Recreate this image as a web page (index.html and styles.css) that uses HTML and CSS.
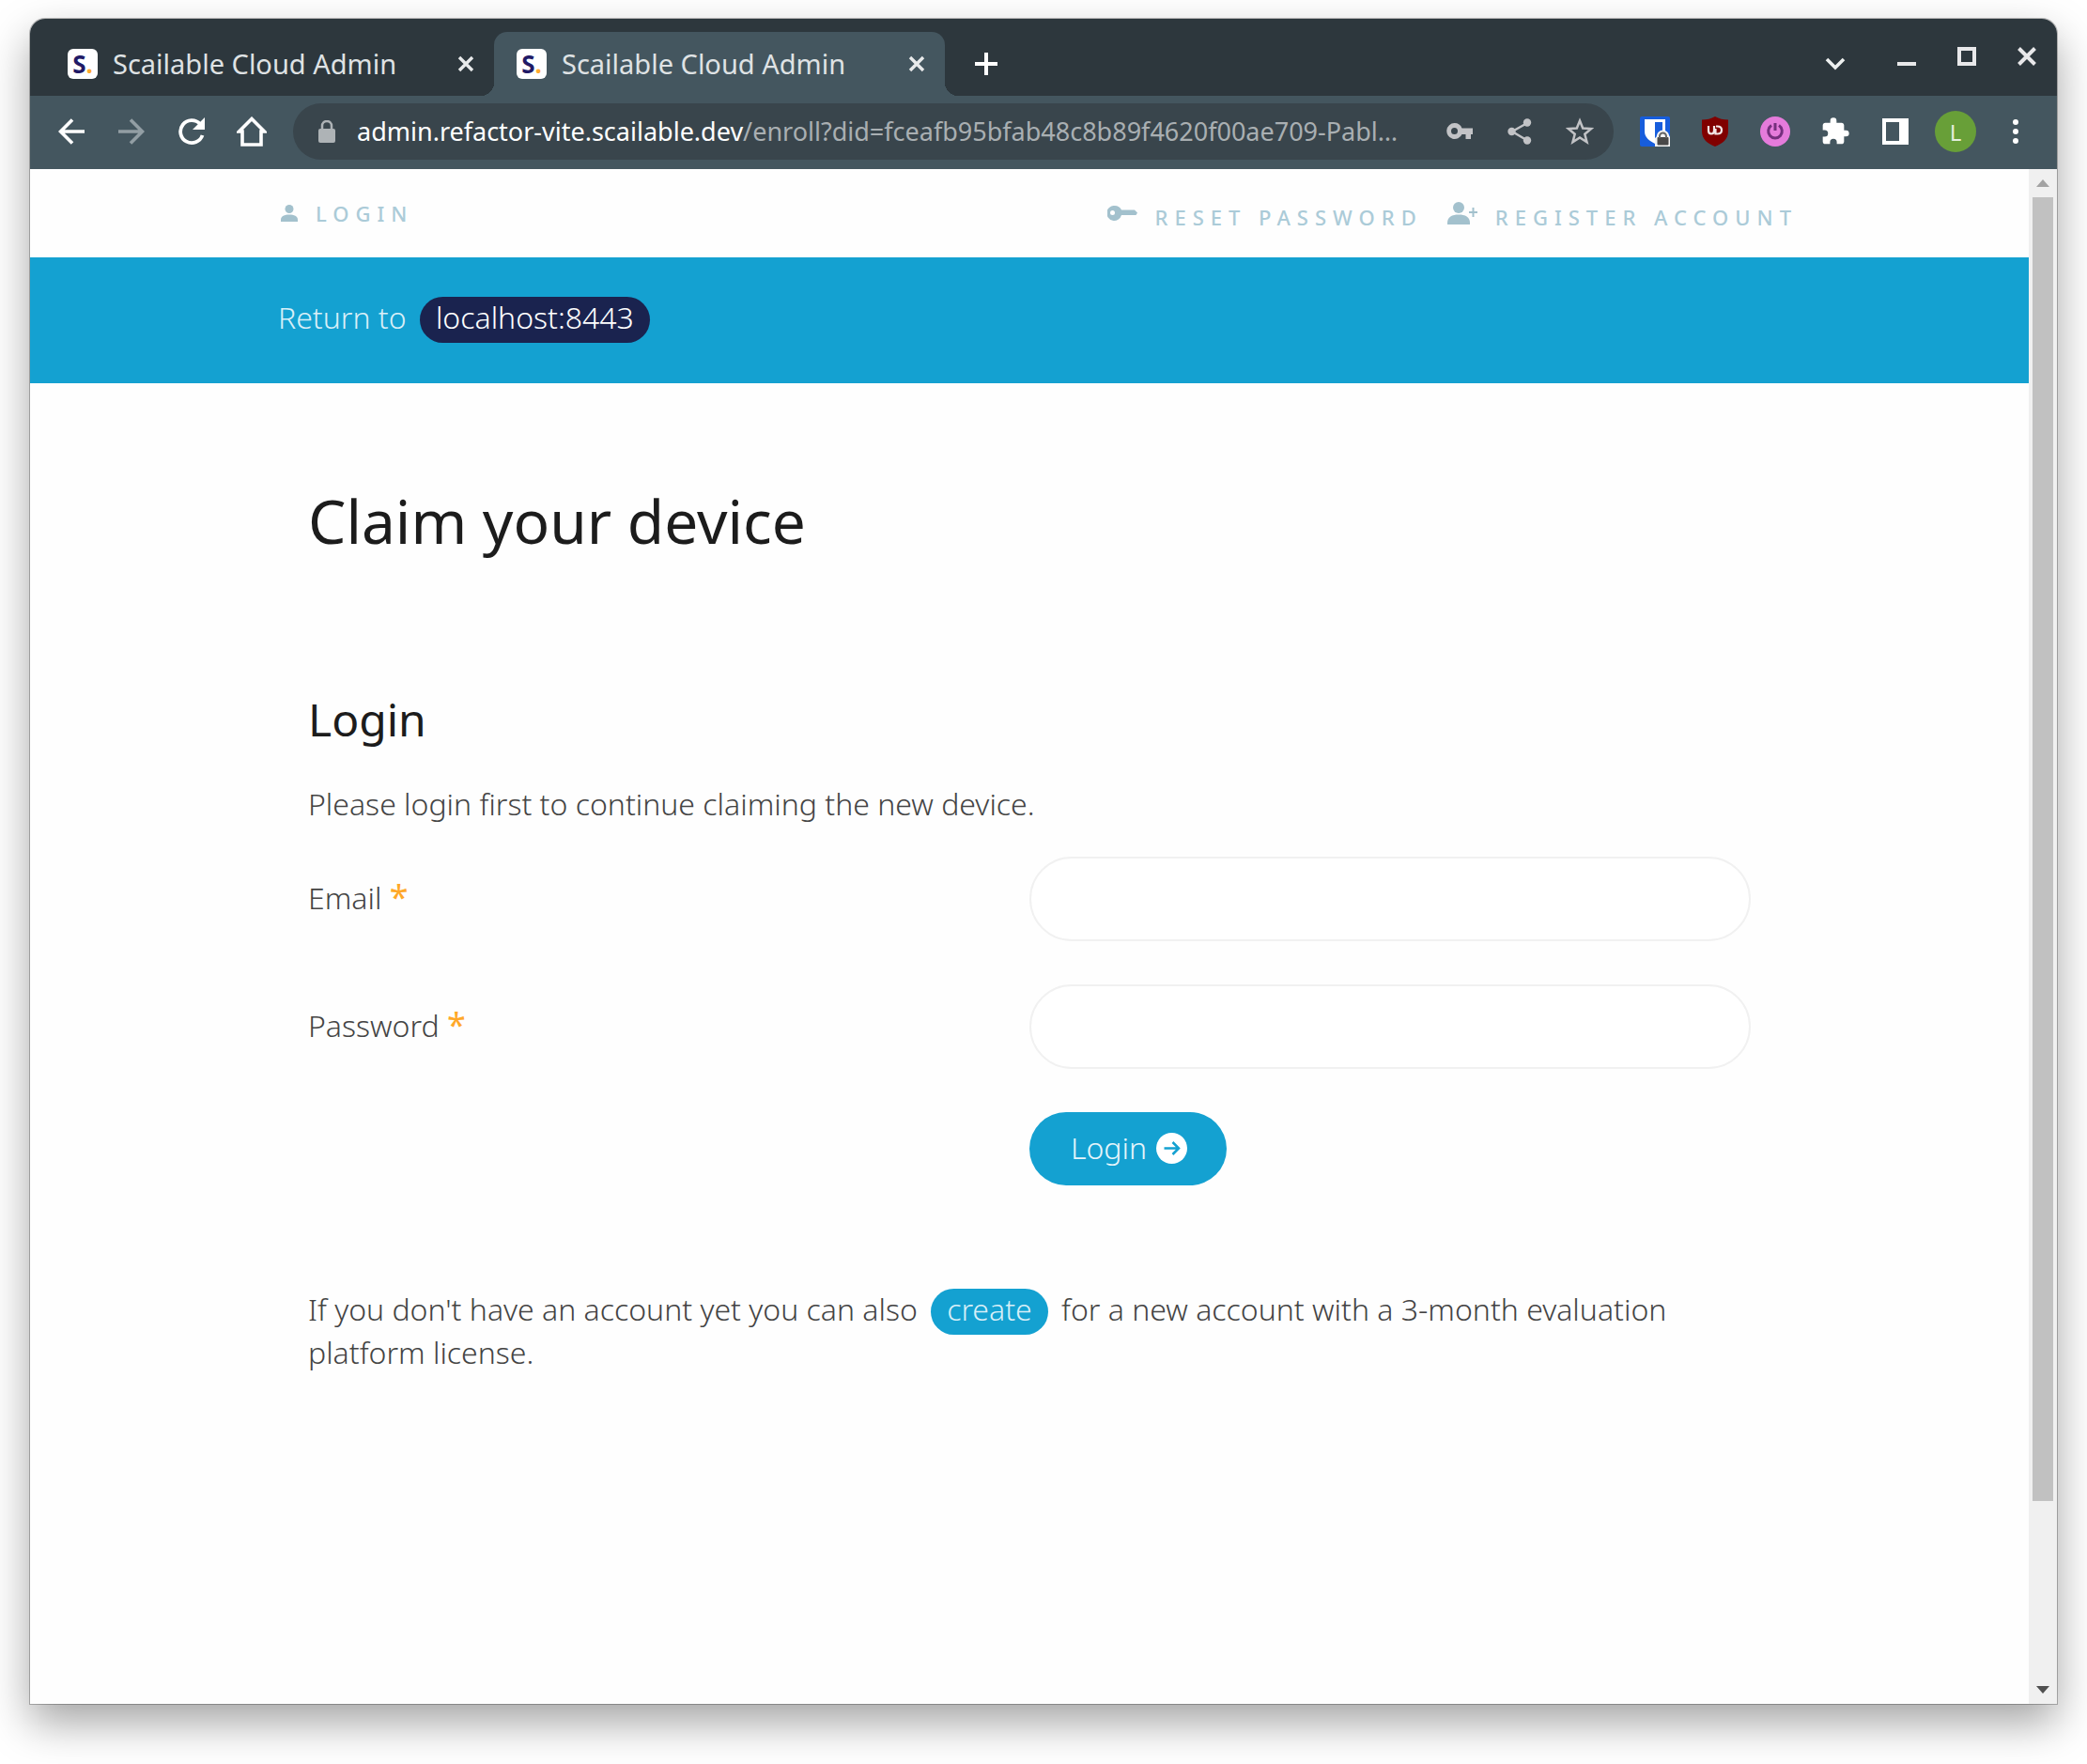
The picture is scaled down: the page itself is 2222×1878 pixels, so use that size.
FILE: index.html
```
<!DOCTYPE html>
<html lang="en">
<head>
<meta charset="utf-8">
<title>Scailable Cloud Admin</title>
<link rel="stylesheet" href="styles.css">
</head>
<body>
<div class="window">
  <div class="tabstrip">
    <div class="tab">
      <span class="favicon">S<i>.</i></span>
      <span class="tab-title">Scailable Cloud Admin</span>
      <button class="tab-close" type="button" aria-label="Close tab"><svg width="18" height="18" viewBox="0 0 18 18"><path d="M2 2l14 14M16 2L2 16" stroke="#e8eaeb" stroke-width="3.4"/></svg></button>
    </div>
    <div class="tab tab-active">
      <span class="favicon">S<i>.</i></span>
      <span class="tab-title">Scailable Cloud Admin</span>
      <button class="tab-close" type="button" aria-label="Close tab"><svg width="18" height="18" viewBox="0 0 18 18"><path d="M2 2l14 14M16 2L2 16" stroke="#e8eaeb" stroke-width="3.4"/></svg></button>
    </div>
    <button class="icon-button new-tab" type="button" aria-label="New tab"><svg width="24" height="24" viewBox="0 0 24 24"><path d="M12 0v24M0 12h24" stroke="#fff" stroke-width="4"/></svg></button>
    <button class="icon-button tab-search" type="button" aria-label="Search tabs"><svg width="22" height="14" viewBox="0 0 22 14"><path d="M2 2l9 9 9-9" fill="none" stroke="#eef0f0" stroke-width="3.6"/></svg></button>
    <div class="window-controls">
      <button class="icon-button" type="button" aria-label="Minimize"><svg width="20" height="20" viewBox="0 0 20 20"><path d="M0 18h20" stroke="#e8e8ea" stroke-width="4"/></svg></button>
      <button class="icon-button" type="button" aria-label="Maximize"><svg width="20" height="20" viewBox="0 0 20 20"><path d="M2 2h16v16H2z" fill="none" stroke="#e8e8ea" stroke-width="4"/></svg></button>
      <button class="icon-button" type="button" aria-label="Close"><svg width="20" height="20" viewBox="0 0 20 20"><path d="M1.500 1.500l17 17M18.500 1.500l-17 17" stroke="#e8e8ea" stroke-width="4"/></svg></button>
    </div>
  </div>

  <div class="toolbar">
    <button class="icon-button" type="button" aria-label="Back"><svg width="28" height="28" viewBox="0 0 28 28"><path d="M28 14H3M15 1.500L2.500 14 15 26.500" fill="none" stroke="#fff" stroke-width="3.600"/></svg></button>
    <button class="icon-button" type="button" aria-label="Forward"><svg width="28" height="28" viewBox="0 0 28 28"><path d="M0 14h25M13 1.500L25.500 14 13 26.500" fill="none" stroke="#929ea4" stroke-width="3.600"/></svg></button>
    <button class="icon-button" type="button" aria-label="Reload"><svg width="30" height="30" viewBox="0 0 30 30"><path d="M26.500 19A12 12 0 1 1 24 7" fill="none" stroke="#fff" stroke-width="3.800"/><path d="M29 0v13H16z" fill="#fff"/></svg></button>
    <button class="icon-button" type="button" aria-label="Home"><svg width="32" height="32" viewBox="0 0 32 32"><path d="M16 2.500L2.500 16H6v14h20V16h3.500z" fill="none" stroke="#fff" stroke-width="3.600"/></svg></button>
    <div class="address-bar">
      <svg width="18" height="24" viewBox="0 0 18 24"><rect y="9" width="18" height="15" rx="2" fill="#aeb3b6"/><path d="M4 10V6a5 5 0 0 1 10 0v4" fill="none" stroke="#aeb3b6" stroke-width="2.500"/></svg>
      <span class="url"><b>admin.refactor-vite.scailable.dev</b>/enroll?did=fceafb95bfab48c8b89f4620f00ae709-Pabl…</span>
      <div class="address-actions">
        <button class="icon-button" type="button" aria-label="Saved passwords"><svg width="28" height="18" viewBox="0 0 28 18"><path fill="#c2c3c6" fill-rule="evenodd" d="M8.500 0a8.500 8.500 0 0 1 8 5.500H28v6.500h-2v5h-5.500v-5h-4A8.500 8.500 0 1 1 8.500 0zm0 5a3.500 3.500 0 1 0 0 7 3.500 3.500 0 0 0 0-7z"/></svg></button>
        <button class="icon-button" type="button" aria-label="Share"><svg width="26" height="28" viewBox="0 0 26 28"><path d="M21 5L5 14l16 9.500" fill="none" stroke="#c2c3c6" stroke-width="2.500"/><g fill="#c2c3c6"><circle cx="21" cy="4.500" r="4.200"/><circle cx="4.500" cy="14" r="4.200"/><circle cx="21" cy="23.500" r="4.200"/></g></svg></button>
        <button class="icon-button" type="button" aria-label="Bookmark"><svg width="30" height="30" viewBox="0 0 30 30"><path d="M15 3.500l3.200 8 8.800.6-6.700 5.600 2.200 8.500-7.500-4.700-7.500 4.700 2.200-8.500L3 12.100l8.800-.6z" fill="none" stroke="#c2c3c6" stroke-width="2.500"/></svg></button>
      </div>
    </div>
    <button class="icon-button" type="button" aria-label="Password manager"><svg width="32" height="32" viewBox="0 0 32 32"><rect width="32" height="32" rx="2" fill="#175ddc"/><path d="M5 3h22v13c0 6-5 10-11 13C10 26 5 22 5 16z" fill="#fff"/><path d="M16 6h8v10c0 4-3 7-8 10z" fill="#175ddc"/><path d="M16 32V23q2-1 2-3 1-5 6.500-5.500Q30 15 31 20l1 2v10z" fill="#f4f4f4"/><rect x="18.500" y="22" width="12" height="8.500" rx="1" fill="#484848"/><path d="M21 23v-2a3.500 3.500 0 0 1 7 0v2" fill="none" stroke="#666" stroke-width="2"/></svg></button>
    <button class="icon-button" type="button" aria-label="Content blocker"><svg width="28" height="32" viewBox="0 0 28 32"><path d="M14 0c4 2.500 9 3.500 14 3.500V16c0 8-6 13-14 16C6 29 0 24 0 16V3.500C5 3.500 10 2.500 14 0z" fill="#800000"/><path d="M7 10v5q0 3.500 3 3.500t3-3.500v-5M14.500 13v5.500h2q4.500 0 4.500-4t-4.500-4H15" fill="none" stroke="#f3e6e6" stroke-width="2.200"/></svg></button>
    <button class="icon-button" type="button" aria-label="Power extension"><svg width="32" height="32" viewBox="0 0 32 32"><circle cx="16" cy="16" r="16" fill="#e57bdb"/><path d="M12 9.500a7.300 7.300 0 1 0 8 0M16 7v8" fill="none" stroke="#752f7d" stroke-width="3"/></svg></button>
    <button class="icon-button" type="button" aria-label="Extensions"><svg width="32" height="32" viewBox="0 0 24 24"><path fill="#fff" d="M20.500 11H19V7c0-1.100-.9-2-2-2h-4V3.500a2.500 2.500 0 0 0-5 0V5H4c-1.100 0-1.990.9-1.990 2v3.800H3.500a2.700 2.700 0 0 1 0 5.400H2V20c0 1.100.9 2 2 2h3.800v-1.500a2.700 2.700 0 0 1 5.400 0V22H17c1.100 0 2-.9 2-2v-4h1.500a2.500 2.500 0 0 0 0-5z"/></svg></button>
    <button class="icon-button" type="button" aria-label="Side panel"><svg width="28" height="28" viewBox="0 0 28 28"><path fill="#fff" fill-rule="evenodd" d="M0 0h28v28H0zM4 4v20h14V4z"/></svg></button>
    <button class="icon-button avatar" type="button" aria-label="Profile">L</button>
    <button class="icon-button" type="button" aria-label="Menu"><svg width="6" height="26" viewBox="0 0 6 26"><g fill="#fff"><circle cx="3" cy="3" r="3"/><circle cx="3" cy="13" r="3"/><circle cx="3" cy="23" r="3"/></g></svg></button>
  </div>

  <div class="viewport">
    <div class="page">
      <header class="container topnav">
        <a class="nav-link" href="#login"><svg width="18" height="18" viewBox="0 0 18 18"><g fill="#a3c1cd"><circle cx="9" cy="4.500" r="4.500"/><path d="M0 18v-2c0-4 4-5.500 9-5.500s9 1.500 9 5.500v2z"/></g></svg>Login</a>
        <nav class="nav-group">
          <a class="nav-link" href="#reset"><svg class="raised" width="32" height="16" viewBox="0 0 32 16"><path fill="#a3c1cd" fill-rule="evenodd" d="M8 0a8 8 0 0 1 7 4.500h14l3 3-1.500 2.500H15A8 8 0 1 1 8 0zM5.500 5a2.500 2.500 0 1 0 0 5 2.500 2.500 0 0 0 0-5z"/></svg>Reset password</a>
          <a class="nav-link" href="#register"><svg class="raised" width="32" height="24" viewBox="0 0 32 24"><g fill="#a3c1cd"><circle cx="12" cy="6" r="6"/><path d="M0 24v-2c0-6 5-8.500 12-8.500S24 16 24 22v2z"/></g><path d="M27.500 6v10M23 11h9" stroke="#a3c1cd" stroke-width="2"/></svg>Register account</a>
        </nav>
      </header>
      <div class="banner">
        <p class="container">Return to <a class="pill pill-dark" href="#device">localhost:8443</a></p>
      </div>
      <main class="container content">
        <h1>Claim your device</h1>
        <h2>Login</h2>
        <p>Please login first to continue claiming the new device.</p>
        <form class="login-form">
          <label for="email">Email <span class="required">*</span></label>
          <input id="email" type="email">
          <label for="password">Password <span class="required">*</span></label>
          <input id="password" type="password">
          <button class="submit" type="button">Login<svg width="33" height="33" viewBox="0 0 33 33"><circle cx="16.500" cy="16.500" r="16.500" fill="#fff"/><path d="M8.500 16.500h15M17.500 10l6.500 6.500-6.500 6.500" fill="none" stroke="#14a1d1" stroke-width="2.500"/></svg></button>
        </form>
        <p>If you don't have an account yet you can also <a class="pill" href="#create">create</a> for a new account with a 3-month evaluation platform license.</p>
      </main>
    </div>
    <div class="scrollbar">
      <svg width="14" height="8" viewBox="0 0 14 8"><path d="M7 0l7 8H0z" fill="#a3a3a3"/></svg>
      <span class="thumb"></span>
      <span></span>
      <svg width="14" height="8" viewBox="0 0 14 8"><path d="M7 8l7-8H0z" fill="#505050"/></svg>
    </div>
  </div>
</div>
</body>
</html>
```
FILE: styles.css
```
* { box-sizing: border-box; }

body {
  display: flex;
  flex-direction: column;
  min-height: 100vh;
  margin: 0;
  padding: 20px 32px 64px;
  background: #fff;
  font-family: "Noto Sans", "Open Sans", sans-serif;
}

h1, h2, p { margin: 0; }
a { text-decoration: none; }
svg { display: block; flex: none; }
button { margin: 0; padding: 0; border: 0; background: none; font: inherit; color: inherit; }

.window {
  flex: 1;
  display: flex;
  flex-direction: column;
  border-radius: 16px 16px 0 0;
  box-shadow: 0 0 0 1px rgba(0, 0, 0, .25), 0 20px 46px rgba(0, 0, 0, .36);
}

/* Browser chrome */
.tabstrip {
  display: flex;
  align-items: flex-end;
  height: 82px;
  padding-right: 10px;
  border-radius: 16px 16px 0 0;
  background: #2d373d;
}

.tab {
  position: relative;
  display: flex;
  align-items: center;
  width: 494px;
  height: 68px;
  padding: 0 18px 0 40px;
  color: #dfe2e4;
}

.tab-active {
  width: 480px;
  padding-left: 24px;
  border-radius: 14px 14px 0 0;
  background: #44565f;
}

.tab-active::before,
.tab-active::after {
  content: "";
  position: absolute;
  bottom: 0;
  width: 14px;
  height: 14px;
}
.tab-active::before { right: 100%; background: radial-gradient(circle at 0 0, transparent 14px, #44565f 14px); }
.tab-active::after { left: 100%; background: radial-gradient(circle at 100% 0, transparent 14px, #44565f 14px); }

.favicon {
  width: 32px;
  height: 32px;
  border-radius: 6px;
  background: #fff;
  color: #211a66;
  font-size: 26px;
  font-weight: 700;
  line-height: 32px;
  text-align: center;
}
.favicon i { color: #ffab2e; font-style: normal; }

.tab-title { flex: 1; padding-left: 16px; font-size: 29px; line-height: 40px; }
.tab-close { display: grid; place-items: center; width: 24px; height: 24px; }

.icon-button { display: grid; place-items: center; flex: none; width: 44px; height: 44px; }
.new-tab { height: 68px; margin-left: 22px; }
.tab-search { height: 68px; margin-left: auto; }
.window-controls { display: flex; gap: 20px; align-items: center; height: 82px; margin-left: 32px; padding-bottom: 2px; }

.toolbar {
  display: flex;
  align-items: center;
  gap: 20px;
  height: 78px;
  padding: 0 22px 2px;
  background: #44565f;
}

.address-bar {
  flex: 1;
  display: flex;
  align-items: center;
  min-width: 0;
  height: 60px;
  margin: 0 2px;
  padding: 0 14px 0 27px;
  border-radius: 30px;
  background: #39454c;
}
.url { flex: 1; min-width: 0; padding-left: 23px; overflow: hidden; color: #a9afb2; font-size: 27px; line-height: 40px; white-space: nowrap; }
.url b { color: #fff; font-weight: 400; }
.address-actions { display: flex; gap: 20px; }
.avatar { border-radius: 50%; background: #689f38; color: #e4eedb; font-size: 24px; }

/* Page */
.viewport { flex: 1; display: flex; background: #fefefe; }
.page { flex: 1; min-width: 0; }
.container { width: 100%; max-width: 1600px; margin: 0 auto; }

.topnav { display: flex; justify-content: space-between; height: 94px; padding: 31px 0 0 3px; }
.nav-group { display: flex; gap: 26px; margin-right: -18px; padding-top: 4px; }
.nav-link {
  display: flex;
  align-items: center;
  gap: 19px;
  height: 32px;
  color: #abcbd8;
  font-size: 22px;
  font-weight: 500;
  letter-spacing: 7px;
  line-height: 32px;
  text-transform: uppercase;
}
.raised { margin-bottom: 8px; }

.banner { padding: 41px 0 47px; background: #14a1d1; color: #d8eff8; }
.banner, .content { font-size: 32px; font-weight: 300; line-height: 46px; }

.pill { margin: 0 6px; padding: 0 17px 6px; border-radius: 25px; background: #14a1d1; color: #d8eff8; }
.pill-dark { background: #1a234f; color: #fff; }

.content { padding: 107px 32px 64px; color: #444; }
h1 { margin-bottom: 141px; color: #1c1c1c; font-size: 64px; font-weight: 400; line-height: 80px; }
h2 { margin-bottom: 37px; color: #1c1c1c; font-size: 48px; font-weight: 400; line-height: 60px; }

.login-form {
  display: grid;
  grid-template-columns: 1fr 1fr;
  align-items: center;
  gap: 46px 0;
  margin: 33px 0 109px;
}
.login-form label { padding-bottom: 2px; }
.login-form input {
  width: 100%;
  height: 90px;
  padding: 0 40px;
  border: 2px solid #f1f1f1;
  border-radius: 45px;
  background: #fff;
  font: inherit;
}
.required { color: #ffa828; font-size: 36px; font-weight: 400; line-height: 32px; }
.submit {
  grid-column: 2;
  justify-self: start;
  display: flex;
  align-items: center;
  gap: 10px;
  height: 78px;
  padding: 0 42px 2px 44px;
  border-radius: 39px;
  background: #14a1d1;
  color: #e6f5fb;
}

.scrollbar {
  display: grid;
  grid-template-rows: 30px 1388fr 186fr 30px;
  place-items: center;
  width: 30px;
  background: #f0f0f0;
}
.thumb { width: 22px; height: 100%; background: #c1c1c1; }
```
